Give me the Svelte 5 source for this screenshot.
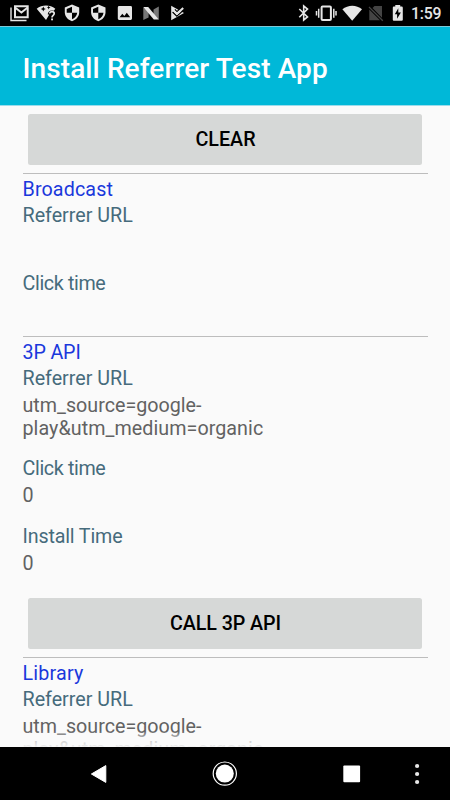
<script>
  const sections = [
    {
      title: 'Broadcast',
      track: 0.12,
      fields: [
        { label: 'Referrer URL', track: 0, lines: [] },
        { label: 'Click time', track: -0.36, lines: [] }
      ]
    },
    {
      title: '3P API',
      track: -0.15,
      fields: [
        { label: 'Referrer URL', track: 0, lines: ['utm_source=google-', 'play&utm_medium=organic'] },
        { label: 'Click time', track: -0.36, lines: ['0'] },
        { label: 'Install Time', track: -0.16, lines: ['0'] }
      ],
      action: 'CALL 3P API'
    },
    {
      title: 'Library',
      track: 0.2,
      fields: [
        { label: 'Referrer URL', track: 0, lines: ['utm_source=google-', 'play&utm_medium=organic'] }
      ]
    }
  ];
</script>

<div class="phone">
  <div class="status">
    <svg width="190" height="26" viewBox="0 0 190 26">
      <g fill="none" stroke="#e6e6e6">
        <path d="M11 7.5V20.5H26.5" stroke-width="1.4" />
        <path d="M15 6.3H27.7V17.3H15Z" stroke-width="2" />
        <path d="M15 7.5L21.4 12.5L27.7 7.5" stroke-width="2" />
      </g>
      <path fill="#e6e6e6" d="M36.7 8.8C42 4.4 50 4.4 55.3 8.8L53.8 10.8C50.5 9.5 47.6 11.5 47.8 14.4H49.3L46 20Z" />
      <path fill="#000" d="M43.3 6.6l.8 1.6 1.7.8-1.7.8-.8 1.6-.8-1.6-1.7-.8 1.7-.8zM48.7 5.6l.6 1.3 1.3.6-1.3.6-.6 1.3-.6-1.3-1.3-.6 1.3-.6z" />
      <path fill="none" stroke="#e6e6e6" stroke-width="1.7" d="M49.7 13.6C49.7 10.9 54.2 11 54.2 13.6C54.2 15.3 52 15.3 52 17.4" />
      <rect x="51.1" y="18.5" width="1.9" height="1.8" fill="#e6e6e6" />
      {#each [72, 98.3] as x}
        <g transform="translate({x} 0)">
          <path fill="#e6e6e6" d="M0 4.6L7.2 7.6V12.3C7.2 16.5 4.2 20 0 21.2C-4.2 20-7.2 16.5-7.2 12.3V7.6Z" />
          <path fill="#000" d="M0 6.8V12.8H-5.3V8.9ZM0 12.8H5.2C4.8 15.8 2.8 18.4 0 19.3Z" />
        </g>
      {/each}
      <path fill="#e6e6e6" fill-rule="evenodd" d="M119.2 6H130.6Q132 6 132 7.4V18.6Q132 20 130.6 20H119.2Q117.8 20 117.8 18.6V7.4Q117.8 6 119.2 6ZM119.6 17.3H130.2L126.8 12.7L124.3 16L122.3 13.7Z" />
      <path fill="#777" d="M143.3 7.5L148.6 11V17.5L143.3 20ZM158.8 6.5V19.5L153.5 16V9.5Z" />
      <path fill="#e6e6e6" d="M143.3 7H148.2L158.8 19.5H153.8Z" />
      <path fill="#e6e6e6" d="M171.2 5.7L184 12.9L171.2 20.3Z" />
      <path fill="none" stroke="#000" stroke-width="1.3" d="M172.6 12L176.8 16.2L183 10.5M174.8 9.5L177 11.7L181.5 7.4" />
      <path fill="none" stroke="#e6e6e6" stroke-width="2" d="M173.6 10.4L177 13.8L183.2 8" />
    </svg>
    <svg class="right" width="120" height="26" viewBox="290 0 120 26">
      <path fill="none" stroke="#e6e6e6" stroke-width="1.6" d="M299.3 9L307.5 17L303.7 20V6L307.5 9L299.3 17.3" />
      <rect x="321.6" y="6.6" width="9.3" height="13.5" rx="1" fill="none" stroke="#e6e6e6" stroke-width="2" />
      <path stroke="#e6e6e6" stroke-width="1.5" d="M318.7 8.8V17.8M316.5 11V15.6M333.8 8.8V17.8M336 11V15.6" />
      <path fill="#e6e6e6" d="M342.4 9.2C348 4.5 356.5 4.5 362 9.2L352.2 20.8Z" />
      <path fill="#444" d="M374.5 6H382V17.8L372.5 8ZM369.3 9.5L380 20.2H369.3Z" />
      <path stroke="#444" stroke-width="1.3" d="M369 7L382.8 20.7" />
      <path fill="#e6e6e6" d="M395.3 5H400.2V6.6H401.7Q402.8 6.6 402.8 7.7V19.7Q402.8 20.7 401.7 20.7H393.8Q392.8 20.7 392.8 19.7V7.7Q392.8 6.6 393.8 6.6H395.3Z" />
      <path fill="#000" d="M398.3 8.2L394.8 14.2H397.1V18.8L400.9 12.5H398.3Z" />
    </svg>
    <span class="clock">1:59</span>
  </div>
  <header><h1>Install Referrer Test App</h1></header>
  <main>
    <button class="clear">CLEAR</button>
    {#each sections as s}
      <section>
        <h2 style:letter-spacing="{s.track}px">{s.title}</h2>
        {#each s.fields as f}
          <div class="field">
            <div class="label" style:letter-spacing="{f.track}px">{f.label}</div>
            <div class="value">{#each f.lines as line}<div>{line}</div>{/each}</div>
          </div>
        {/each}
        {#if s.action}<button class="call">{s.action}</button>{/if}
      </section>
    {/each}
    <div class="fade"></div>
  </main>
  <nav>
    <svg width="450" height="53" viewBox="0 747 450 53">
      <path fill="#fff" stroke="#fff" stroke-linejoin="round" d="M91.4 774L105.8 765.6V782.4Z" />
      <circle cx="224.8" cy="773.6" r="11.6" fill="none" stroke="#fff" stroke-width="1.2" />
      <circle cx="224.8" cy="773.6" r="9" fill="#fff" />
      <rect x="343.3" y="765.5" width="16.8" height="16.8" rx="1" fill="#fff" />
      <g fill="#e8e8e8"><circle cx="417.1" cy="766" r="2.1" /><circle cx="417.1" cy="774" r="2.1" /><circle cx="417.1" cy="782" r="2.1" /></g>
    </svg>
  </nav>
</div>

<style>
  :global(body) { margin: 0; }
  .phone {
    width: 450px; height: 800px; display: flex; flex-direction: column;
    overflow: hidden; background: #fafafa; font-family: Roboto, sans-serif;
  }
  .status { flex: none; height: 26px; background: #000; display: flex; align-items: center; }
  .right { margin-left: 100px; }
  .clock { color: #e6e6e6; font-size: 15.8px; line-height: 26px; font-weight: 500; letter-spacing: -0.2px; margin-left: 1px; padding-top: 2px; }
  header {
    flex: none; box-sizing: border-box; height: 80px; background: #00b8d8;
    border-top: 1px solid #7fc9d8; border-bottom: 1px solid #9bdcec;
    padding: 0 22.5px; display: flex; align-items: center;
  }
  h1 { margin: 5px 0 0; color: #fff; font-size: 28px; line-height: 34px; font-weight: 500; letter-spacing: 0.1px; white-space: nowrap; }
  main { flex: 1; min-height: 0; overflow: hidden; position: relative; padding: 8px 22.5px 0; }
  button {
    display: block; box-sizing: border-box; width: 394px; height: 50.5px; margin: 0 5.5px;
    border: 0; border-radius: 2.5px; background: #d6d8d7; color: #000;
    font: 500 19.7px/52px Roboto, sans-serif; padding: 0 0 0 1px; text-align: center;
  }
  section { border-top: 1.4px solid #bdbdbd; padding-top: 4px; }
  section:nth-of-type(1) .field:last-child { padding-bottom: 13.5px; }
  .clear { margin-bottom: 8.5px; }
  .call { margin-bottom: 8.5px; margin-top: 4.6px; letter-spacing: -0.08px; }
  h2 { margin: 0; height: 27px; color: #1a38dc; font-weight: 400; font-size: 19.7px; line-height: 23px; }
  .field { font-size: 19.7px; line-height: 22.8px; padding-bottom: 17.7px; white-space: nowrap; }
  .label { height: 27px; color: #466b7c; }
  .value { min-height: 23px; color: #626262; }
  .value div:nth-child(2) { letter-spacing: 0.06px; }
  .fade {
    position: absolute; left: 0; right: 0; bottom: 0; height: 16px;
    background: linear-gradient(#fafafa00, #fafafaa6 50%, #fafafaf0);
  }
  nav { flex: none; height: 53px; background: #000; }
  nav svg, .status svg { display: block; flex: none; }
</style>
